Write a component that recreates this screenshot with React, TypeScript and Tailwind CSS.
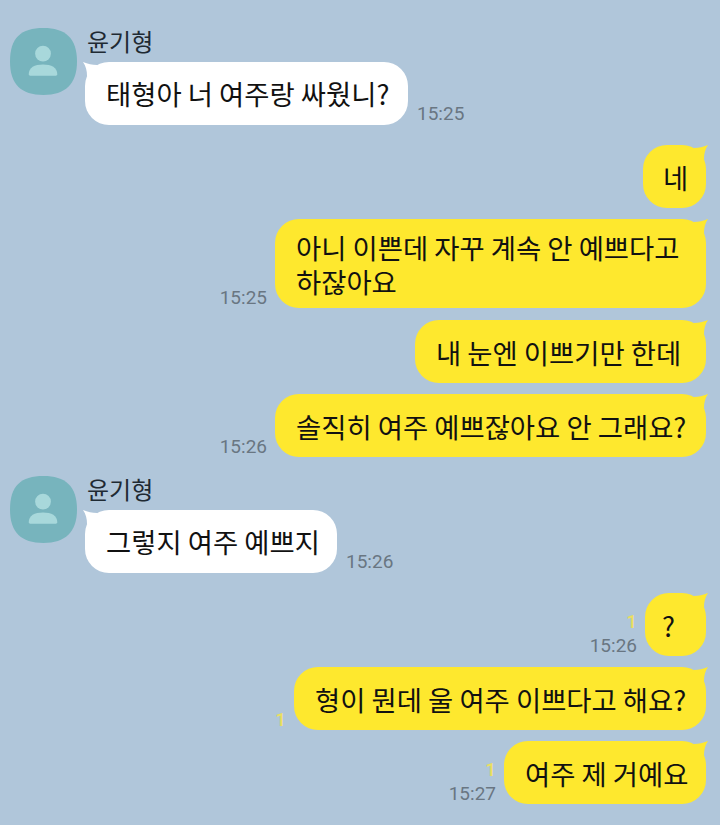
const FONT = "font-['Noto_Sans_CJK_KR','Noto_Sans',sans-serif]"

function Avatar() {
  return (
    <svg width="67" height="67" viewBox="0 0 68 68" className="shrink-0">
      <path
        d="M34 0C56 0 68 10 68 34C68 57 56 68 34 68C11 68 0 57 0 34C0 10 11 0 34 0Z"
        fill="#77b4bd"
      />
      <circle cx="33.5" cy="26" r="8" fill="#a8d8db" />
      <path d="M19 47C19 40 25 37 33.500 37C42 37 48 40 48 47C48 48 47 48.500 46 48.500H21C20 48.500 19 48 19 47Z" fill="#a8d8db" />
    </svg>
  )
}

function Left({ text, time, mt, w }: { text: string; time: string; mt: string; w: string }) {
  return (
    <div className={`flex pl-[10px] ${mt}`}>
      <Avatar />
      <div className="ml-[8px] flex flex-col">
        <div className="h-[38px] -mt-[4px] pl-[2px] text-[24px] leading-[33px] text-[#1f2a33]">윤기형</div>
        <div className="flex items-end">
          <div className={`relative flex h-[63px] items-center whitespace-nowrap rounded-[24px] bg-white pl-[21px] text-[27.4px] text-[#111] ${w}`}>
            <svg width="14" height="14" viewBox="0 0 14 14" className="absolute left-[-2px] top-[0px]">
              <path d="M0 0C5 2 9 3 14 3V14H4C4 9 3 4 0 0Z" fill="#fff" />
            </svg>
            {text}
          </div>
          <span className="ml-[9px] mb-[-1px] font-['Roboto',sans-serif] text-[19px] leading-[24px] text-[#697682]">{time}</span>
        </div>
      </div>
    </div>
  )
}

function Right({
  lines,
  time,
  unread,
  mt,
  w,
}: {
  lines: string[]
  time?: string
  unread?: boolean
  mt: string
  w: string
}) {
  return (
    <div className={`flex items-end justify-end pr-[14px] ${mt}`}>
      <div className="mr-[8px] mb-[-2px] flex flex-col items-end font-['Roboto',sans-serif]">
        {unread && <span className="text-[19px] font-medium leading-[24px] text-[#ebdf62]">1</span>}
        {time && <span className="text-[19px] leading-[24px] text-[#697682]">{time}</span>}
      </div>
      <div className={`relative flex flex-col justify-center rounded-[24px] bg-[#fee82e] py-[14px] text-[27.4px] leading-[34px] text-[#111] ${w}`}>
        <svg width="14" height="14" viewBox="0 0 14 14" className="absolute right-[-2px] top-[0px]">
          <path d="M14 0C9 2 5 3 0 3V14H10C10 9 11 4 14 0Z" fill="#fee82e" />
        </svg>
        {lines.map((l) => (
          <div key={l} className="whitespace-nowrap">{l}</div>
        ))}
      </div>
    </div>
  )
}

export default function App() {
  return (
    <div className={`h-[825px] w-[720px] overflow-hidden bg-[#b0c6da] pt-[28px] ${FONT}`}>
      <Left text="태형아 너 여주랑 싸웠니?" time="15:25" mt="" w="w-[323px]" />
      <Right lines={["네"]} mt="mt-[20px]" w="w-[63px] h-[63px] pl-[20px]" />
      <Right
        lines={["아니 이쁜데 자꾸 계속 안 예쁘다고", "하잖아요"]}
        time="15:25"
        mt="mt-[11px]"
        w="w-[431px] h-[89px] pl-[21px]"
      />
      <Right lines={["내 눈엔 이쁘기만 한데"]} mt="mt-[12px]" w="w-[291px] h-[63px] pl-[21px]" />
      <Right lines={["솔직히 여주 예쁘잖아요 안 그래요?"]} time="15:26" mt="mt-[11px]" w="w-[431px] h-[63px] pl-[21px]" />
      <Left text="그렇지 여주 예쁘지" time="15:26" mt="mt-[19px]" w="w-[252px]" />
      <Right lines={["?"]} time="15:26" unread mt="mt-[20px]" w="w-[61px] h-[63px] pl-[17px]" />
      <Right lines={["형이 뭔데 울 여주 이쁘다고 해요?"]} unread mt="mt-[11px]" w="w-[412px] h-[63px] pl-[21px]" />
      <Right lines={["여주 제 거예요"]} time="15:27" unread mt="mt-[11px]" w="w-[202px] h-[63px] pl-[21px]" />
    </div>
  )
}
